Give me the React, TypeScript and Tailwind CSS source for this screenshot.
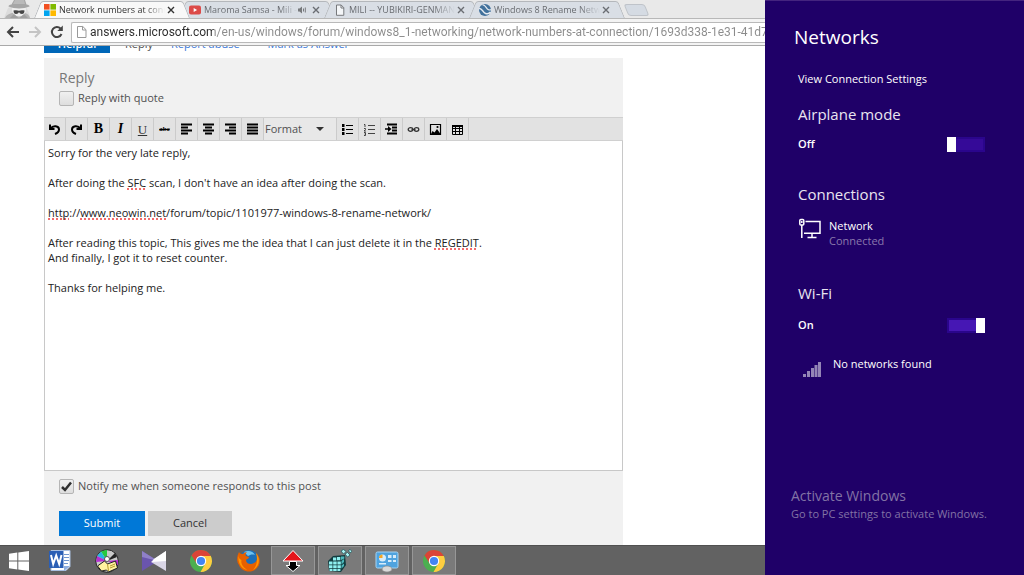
import React from 'react'

const TABS = [
  { title: 'Network numbers at conn', icon: 'microsoft', active: true },
  { title: 'Maroma Samsa - Mili -', icon: 'youtube', audio: true },
  { title: 'MILI -- YUBIKIRI-GENMAN', icon: 'page' },
  { title: 'Windows 8 Rename Netw', icon: 'neowin' },
]

const URL_TEXT =
  'answers.microsoft.com/en-us/windows/forum/windows8_1-networking/network-numbers-at-connection/1693d338-1e31-41d7-'

const TOOLS_LEFT = ['Undo', 'Redo', 'Bold', 'Italic', 'Underline', 'Strikethrough', 'Align left', 'Align center', 'Align right', 'Justify']
const TOOLS_RIGHT = ['Bulleted list', 'Numbered list', 'Indent', 'Link', 'Image', 'Table']

const PINNED = ['Word', 'Disc Burner', 'KMPlayer', 'Chrome', 'Firefox']
const RUNNING = ['Transfer', 'Registry Editor', 'Control Panel', 'Chrome Incognito']

const TabIcon = ({ name }: { name: string }) => {
  if (name === 'microsoft') {
    return (
      <svg className="size-3 shrink-0" viewBox="0 0 12 12">
        <path fill="#f25022" d="M0 0h5.600v5.600H0z" />
        <path fill="#7fba00" d="M6.400 0H12v5.600H6.400z" />
        <path fill="#00a4ef" d="M0 6.400h5.600V12H0z" />
        <path fill="#ffb900" d="M6.400 6.400H12V12H6.400z" />
      </svg>
    )
  }
  if (name === 'youtube') {
    return (
      <svg className="size-3 shrink-0" viewBox="0 0 12 12">
        <rect y="1.500" width="12" height="9" rx="2" fill="#dc4a48" />
        <path fill="#fff" d="M4.700 4v4l3.400-2z" />
      </svg>
    )
  }
  if (name === 'page') {
    return (
      <svg className="size-3 shrink-0" viewBox="0 0 12 12" fill="#f4f6f8" stroke="#77797c">
        <path d="M2.500 1h4.700l2.600 2.700v7.600H2.500z" />
        <path fill="none" d="M7 1v3h3" />
      </svg>
    )
  }
  return (
    <svg className="size-3 shrink-0" viewBox="0 0 12 12">
      <circle cx="6" cy="6" r="6" fill="#41719c" />
      <path fill="none" stroke="#e6ebf1" strokeWidth="1.500" d="M0 4.500c3-1 3.500 4 6.500 5s4 0 5-1.500" />
      <path fill="none" stroke="#e6ebf1" strokeWidth="1.200" d="M3.500 1c3-.5 3.500 3.500 5.500 4.500s2.500.5 3 0" />
    </svg>
  )
}

const Tab = ({ tab }: { tab: (typeof TABS)[number] }) => (
  <div
    className={`relative flex h-[17px] w-[155px] shrink-0 items-center -mr-2.5 pl-2.5 pr-3 before:absolute before:inset-y-0 before:left-0 before:w-1/2 before:origin-bottom-left before:-skew-x-[22deg] before:rounded-tl-[3px] before:border-l before:border-t before:border-[#b4b7bb] after:absolute after:inset-y-0 after:right-0 after:w-1/2 after:origin-bottom-right after:skew-x-[22deg] after:rounded-tr-[3px] after:border-r after:border-t after:border-[#b4b7bb] ${
      tab.active
        ? 'z-10 text-[#333] before:bg-[#f8f8f8] after:bg-[#f8f8f8]'
        : 'text-[#6a6d72] before:bg-[#d9dee5] after:bg-[#d9dee5]'
    }`}
  >
    <div className="relative z-10 flex min-w-0 flex-1 items-center">
      <TabIcon name={tab.icon} />
      <span className="ml-[3px] min-w-0 flex-1 whitespace-nowrap text-[9px] leading-4 [mask-image:linear-gradient(to_right,black_80%,transparent)]">
        {tab.title}
      </span>
      {tab.audio && (
        <svg className="mr-1 size-2 shrink-0" viewBox="0 0 8 8" fill="#77797c" stroke="#77797c">
          <path stroke="none" d="M0 2.500h1.500L4 .5v7L1.500 5.500H0z" />
          <path fill="none" d="M5.500 2.500v3M7.300 1.500v5" />
        </svg>
      )}
      <button aria-label="Close tab" className="flex size-3 shrink-0 items-center justify-center">
        <svg className="size-2" viewBox="0 0 8 8" stroke="currentColor" strokeWidth="1.400">
          <path d="M1 1l6 6M7 1L1 7" />
        </svg>
      </button>
    </div>
  </div>
)

const BrowserChrome = () => (
  <header className="relative shrink-0 border-b border-[#a9a9a9] bg-[#e9e9e9]">
    <div className="flex h-[18px] items-end">
      <svg className="h-[18px] w-[34px] shrink-0" viewBox="0 0 34 18">
        <path fill="#dcdcdc" d="M4 18L8 8 14 5h11l4 8 1 5z" />
        <path fill="#b4b4b4" d="M5 18c1-3 4-4 7-5h13c3 1 4 2 5 5z" />
        <ellipse cx="19" cy="10" rx="7" ry="6.500" fill="#efefef" />
        <path fill="#a6a6a6" d="M14 0h11l1.500 4.500c2 0 3 1 3 2-6 2.500-15 2.500-21 0 0-1 1-2 3-2z" />
        <path fill="#bababa" d="M15 0h9l1 4H13z" />
        <path fill="#454545" d="M13.500 10.500c2-.5 4-.5 5.500.3 1.500-.8 3.500-.8 5.500-.3 0 2.500-1 3.500-2.500 3.500s-2.500-1-3-2c-.5 1-1.500 2-3 2s-2.500-1-2.500-3.500z" />
        <path fill="#a0a0a0" d="M10 18l4-4 4.500 4zM28 18l-4-4-4.500 4z" />
      </svg>
      {TABS.map((tab) => (
        <Tab key={tab.title} tab={tab} />
      ))}
      <button aria-label="New tab" className="mb-0.5 ml-3 h-3 w-[21px] shrink-0 skew-x-[22deg] rounded-[3px] border border-[#bfc3c9] bg-[#d5dbe3]" />
    </div>
    <div className="flex h-[27px] items-center border-t border-[#b8b8b8] bg-[#f3f3f3] pl-1.5">
      <button aria-label="Back" className="flex w-[22px] shrink-0">
        <svg className="size-3.5" viewBox="0 0 14 14" fill="none" stroke="#444" strokeWidth="2">
          <path d="M13 7H2.500M7 2L2 7l5 5" />
        </svg>
      </button>
      <button aria-label="Forward" className="flex w-[22px] shrink-0">
        <svg className="size-3.5" viewBox="0 0 14 14" fill="none" stroke="#c4c4c4" strokeWidth="2">
          <path d="M1 7h10.500M7 2l5 5-5 5" />
        </svg>
      </button>
      <button aria-label="Reload" className="flex w-[21px] shrink-0">
        <svg className="size-3.5" viewBox="0 0 14 14" fill="none" stroke="#444" strokeWidth="2">
          <path d="M11.500 9A5 5 0 1 1 10.500 3.500" />
          <path fill="#444" stroke="none" d="M12.800.5v5.500H7.300z" />
        </svg>
      </button>
      <div className="flex h-[21px] min-w-0 flex-1 items-center rounded-l-xs border border-r-0 border-[#b9b9b9] bg-white pl-[3px]">
        <svg className="mr-px size-3.5 shrink-0" viewBox="0 0 14 14" fill="none" stroke="#999">
          <path d="M2.500 1.500h5.300l3.200 3.200v7.800H2.500zM7.500 1.500v3.500H11" />
        </svg>
        <input
          aria-label="Address"
          defaultValue={URL_TEXT}
          className='h-5 min-w-0 flex-1 bg-[linear-gradient(to_right,#2b2b2b_124px,#8b8b8b_124px)] bg-clip-text font-["Roboto",sans-serif] text-[12px] text-transparent outline-none'
        />
      </div>
    </div>
  </header>
)

const ToolIcon = ({ name }: { name: string }) => {
  const serif = 'font-["Liberation_Serif",serif] text-[14px] leading-none text-black'
  const lines: Record<string, string> = {
    'Align left': 'M1 1.500h11M1 4.500h7M1 7.500h11M1 10.500h7',
    'Align center': 'M1 1.500h11M3 4.500h7M1 7.500h11M3 10.500h7',
    'Align right': 'M1 1.500h11M5 4.500h7M1 7.500h11M5 10.500h7',
    Justify: 'M1 1.500h11M1 4.500h11M1 7.500h11M1 10.500h11',
  }
  if (name === 'Bold') return <b className={serif}>B</b>
  if (name === 'Italic') return <b className={`${serif} italic`}>I</b>
  if (name === 'Underline') return <span className='font-["Liberation_Serif",serif] text-[13px] leading-none text-[#333] underline'>U</span>
  if (name === 'Strikethrough') return <b className='font-["Liberation_Serif",serif] text-[7px] leading-none text-black line-through'>abc</b>
  return (
    <svg className="size-[13px]" viewBox="0 0 13 13" fill="none" stroke="#000" strokeWidth="2">
      {lines[name] && <path d={lines[name]} />}
      {name === 'Undo' && <path d="M2 1.500v4.500h4.500M2.500 5.500C5 2 11 2.500 11 6.500c0 2-1.500 3.500-4 4.500" />}
      {name === 'Redo' && <path d="M11 1.500v4.500H6.500M10.500 5.500C8 2 2 2.500 2 6.500c0 2 1.500 3.500 4 4.500" />}
      {name === 'Bulleted list' && (
        <>
          <path strokeWidth="1" d="M5 2.500h7M5 6.500h7M5 10.500h7" />
          <path strokeWidth="3" d="M1 2.500h2.500M1 6.500h2.500M1 10.500h2.500" />
        </>
      )}
      {name === 'Numbered list' && (
        <g stroke="#444">
          <path strokeWidth="1" d="M5 2.500h7M5 6.500h7M5 10.500h7M1 1.500h1V4M1 5.500h1.500v1L1 8h2M1 9.500h1.500v3H1M1.500 11h1" />
        </g>
      )}
      {name === 'Indent' && (
        <>
          <path d="M2 1.500h10M7 4.500h5M7 7.500h5M2 10.500h10" />
          <path strokeWidth="1.500" d="M0 6h4" />
          <path fill="#000" stroke="none" d="M3 3l3.500 3L3 9z" />
        </>
      )}
      {name === 'Link' && (
        <g strokeWidth="1.300" stroke="#333">
          <ellipse cx="3.500" cy="6.500" rx="2.300" ry="1.800" />
          <ellipse cx="9.500" cy="6.500" rx="2.300" ry="1.800" />
          <path d="M4.500 6.500h4" />
        </g>
      )}
      {name === 'Image' && (
        <>
          <path strokeWidth="1.200" d="M1.500 1.500h10v10h-10z" />
          <path fill="#000" stroke="none" d="M2 11l1.500-3 2 1.500L8 6l3.500 5z" />
          <circle cx="8.500" cy="4" r="1.100" fill="#000" stroke="none" />
        </>
      )}
      {name === 'Table' && (
        <>
          <path strokeWidth="1" d="M1.500 2.500h10v9h-10zM1.500 5.500h10M1.500 8.500h10M4.500 3v9M8.500 3v9" />
          <path d="M1 3h11" />
        </>
      )}
    </svg>
  )
}

const ToolButton = ({ name }: { name: string }) => (
  <button type="button" aria-label={name} className="flex h-full w-[22px] shrink-0 items-center justify-center border-r border-[#cbcbcb]">
    <ToolIcon name={name} />
  </button>
)

const Misspelt = ({ children }: { children: React.ReactNode }) => (
  <span className="underline decoration-[#f26d6d] decoration-dotted decoration-2 underline-offset-1 [text-decoration-skip-ink:none]">{children}</span>
)

const CHECKBOX =
  'size-[15px] shrink-0 appearance-none rounded-[2px] border border-[#b5b5b5] bg-linear-to-b from-[#f0f0f0] to-[#dedede]'

const ForumPage = () => (
  <main className="min-h-0 flex-1 overflow-hidden bg-white pl-11 pr-[142px] text-[#505050]">
    {/* post actions, scrolled under the browser bar */}
    <div className="-mt-3 flex h-[19px] items-center text-[11px] leading-[19px]">
      <button className="h-full w-[66px] bg-[#0067b8] font-semibold text-white">Helpful</button>
      <button className="ml-[15px]">Reply</button>
      <button className="ml-[18px] flex items-center gap-1 text-[#3a77d8]">
        Report abuse
        <svg className="size-1.5" viewBox="0 0 6 6"><path fill="#222" d="M0 1h6L3 5z" /></svg>
      </button>
      <button className="ml-[18px] text-[#3a77d8]">Mark as Answer</button>
    </div>

    <form className="mt-[5px] bg-[#f1f1f1]" onSubmit={(e) => e.preventDefault()}>
      <div className="px-[15px] pt-2.5">
        <h2 className="text-[14px] leading-5 text-[#777]">Reply</h2>
        <label className="mt-0.5 flex items-center gap-1 pb-[11px] text-[11px] leading-4">
          <input type="checkbox" className={CHECKBOX} />
          Reply with quote
        </label>
      </div>

      <div className="flex h-6 border-y border-[#d0d0d0] bg-[#e2e2e2]">
        {TOOLS_LEFT.map((name) => (
          <ToolButton key={name} name={name} />
        ))}
        <div className="relative w-[73px] shrink-0 border-r border-[#cbcbcb] bg-[#e8e8e8]">
          <select aria-label="Format" className="block h-[22px] w-full appearance-none pl-px text-[11px] leading-4 text-[#505050] outline-none">
            <option>Format</option>
          </select>
          <svg className="pointer-events-none absolute right-3 top-2 h-1.5 w-2" viewBox="0 0 8 6"><path fill="#333" d="M0 1h8L4 5z" /></svg>
        </div>
        {TOOLS_RIGHT.map((name) => (
          <ToolButton key={name} name={name} />
        ))}
      </div>

      <div
        role="textbox"
        aria-multiline="true"
        aria-label="Reply text"
        contentEditable
        suppressContentEditableWarning
        spellCheck={false}
        className="min-h-[330px] border border-t-0 border-[#c8c8c8] bg-white px-[3px] pt-1 text-[11px] leading-[15px] text-[#222] outline-none"
      >
        <p>Sorry for the very late reply,</p>
        <p className="mt-[15px]">After doing the <Misspelt>SFC</Misspelt> scan, I don't have an idea after doing the scan.</p>
        <p className="mt-[15px]"><Misspelt>http</Misspelt>://<Misspelt>www.neowin.net</Misspelt>/forum/topic/1101977-windows-8-rename-network/</p>
        <p className="mt-[15px]">After reading this topic, This gives me the idea that I can just delete it in the <Misspelt>REGEDIT</Misspelt>.</p>
        <p>And finally, I got it to reset counter.</p>
        <p className="mt-[15px]">Thanks for helping me.</p>
      </div>

      <div className="px-[15px] pb-6 pt-[7px]">
        <label className="flex items-center gap-1 text-[11px] leading-4">
          <span className="relative flex">
            <input type="checkbox" defaultChecked className={`peer ${CHECKBOX}`} />
            <svg className="pointer-events-none absolute inset-0 hidden size-[15px] peer-checked:block" viewBox="0 0 15 15" fill="none" stroke="#2f2f2f" strokeWidth="2.500">
              <path d="M3 8l3 3 6-7.500" />
            </svg>
          </span>
          Notify me when someone responds to this post
        </label>
        <div className="mt-[17px] flex gap-[3px] text-[11px]">
          <button type="submit" className="h-[25px] w-[86px] bg-[#0078d7] text-white">Submit</button>
          <button type="button" className="h-[25px] w-[84px] bg-[#cccccc] text-[#333]">Cancel</button>
        </div>
      </div>
    </form>
  </main>
)

const ChromeLogo = () => (
  <>
    <circle cx="12" cy="12" r="11" fill="#4caf50" />
    <path fill="#db4437" d="M12 12L2.500 6.500A11 11 0 0 1 21.800 7H12z" />
    <path fill="#ffcd40" d="M12 12V7h9.800A11 11 0 0 1 11.500 23l4.800-8.500z" />
    <path fill="#db4437" d="M2.500 6.500L7.700 14.500 12 7z" />
    <circle cx="12" cy="12" r="5.200" fill="#fff" />
    <circle cx="12" cy="12" r="4.100" fill="#4285f4" />
  </>
)

const AppIcon = ({ name }: { name: string }) => (
  <svg className="size-6" viewBox="0 0 24 24">
    {name === 'Word' && (
      <>
        <path fill="#fff" stroke="#a9bfe0" d="M3 1.500h19v16l-4 4H3z" />
        <path fill="#2b5fb5" d="M1 2h14.500v17H1z" />
        <path fill="none" stroke="#fff" strokeWidth="2" d="M3 6l2.200 9 3-8.500 3 8.500L13.500 6" />
        <path stroke="#6f95cf" d="M16 5.500h5M16 8.500h5M16 11.500h5M16 14.500h4" />
        <path fill="#8eaee0" d="M16 22l6-5h-6z" />
      </>
    )}
    {name === 'Disc Burner' && (
      <>
        <circle cx="12" cy="12" r="11.300" fill="#c9c9c9" stroke="#222" />
        <path fill="#27c93f" d="M12 12L6 2.500l6-1.800z" />
        <path fill="#27b7e0" d="M12 12L2 7l4-4.500z" />
        <path fill="#b62fd0" d="M12 12L1 13l1-6z" />
        <path fill="#222" d="M12 12l8-8 2 4z" />
        <path fill="#b62fd0" d="M12 12l11-1v5z" />
        <circle cx="12" cy="10" r="2.500" fill="#fff" stroke="#555" />
        <path fill="#fff3a0" stroke="#222" d="M2.500 17l7-5 3 3 8-3 2 7-9 4-2-2-5 1z" />
        <path stroke="#b59a2c" d="M12.500 15l1 7M15 17l5-2M15 19l5-2" />
      </>
    )}
    {name === 'KMPlayer' && (
      <>
        <path fill="#6a55ad" d="M0 2l16 10L0 22z" />
        <path fill="#8f80c7" d="M0 2l16 10L0 8z" />
        <path fill="#d9d6e6" d="M24 2v20L9 13l3-3z" />
        <path fill="#fff" d="M24 2v10L10 13l2-3z" />
      </>
    )}
    {(name === 'Chrome' || name === 'Chrome Incognito') && <ChromeLogo />}
    {name === 'Firefox' && (
      <>
        <circle cx="13" cy="10.500" r="9.500" fill="#1c6fb8" />
        <path fill="#6fc3ee" d="M8 3c4-2 9-1 11 3-3-1-5 0-7 1z" />
        <path fill="#e66000" d="M3 3c1 2 3 2 4 2 1-1 2-2 4-2-1 1-2 3-1 4l3 1c0 2-3 2-3 3 0 4 5 5 8 3 3-1 4-6 2-10 5 4 5 12 0 16-6 5-15 2-17-4C0 12 1 7 3 3z" />
        <path fill="#ff9500" d="M20 4c5 6 3 14-3 17 4-4 5-11 3-17zM2.500 6c0 3 1 4 3 5-1 4 2 8 6 10-6-1-10-7-9-15z" />
      </>
    )}
    {name === 'Transfer' && (
      <>
        <path fill="#e5151b" stroke="#fff" d="M12 1.500L22 12H2z" />
        <path fill="#000" stroke="#fff" d="M8.500 12.500h7v4H19l-7 6-7-6h3.500z" />
      </>
    )}
    {name === 'Registry Editor' && (
      <>
        <path fill="#123d40" d="M0 12l5-5 12-1 1 10-5 7-12-1z" />
        <path fill="#8ff0f0" d="M1 12.500h3.500v3H1zM5.200 12.500h3.500v3H5.200zM9.400 12.500h3.400v3H9.400zM1 16.200h3.500v3H1zM5.200 16.200h3.500v3H5.200zM9.400 16.200h3.400v3H9.400zM1.500 20h3v2h-3zM5.200 20h3.500v2H5.200zM9.400 20h3v2h-3zM5 8.500h3.300v3H5zM9 8h3.300v3.300H9z" />
        <path fill="#4bb9bc" d="M13.500 12l2.500-2v3l-2.500 2.500zM13.500 16.500l2.500-2v2.500l-2.500 2.500zM13 7.500h3.300v2L13 11z" />
        <path fill="#a9f3f3" stroke="#195054" strokeWidth=".7" d="M13 2l2.500-1.500L18 2.500 15.500 5zM17 5l2.500-1.500L22 6l-2.500 2zM20.500 1.500l1.800-1 1.500 2-1.800 1.500z" />
      </>
    )}
    {name === 'Control Panel' && (
      <>
        <rect x="1" y="3" width="22" height="16" rx="1.500" fill="#4fa3df" stroke="#a6d4f4" />
        <circle cx="7.500" cy="9" r="3.500" fill="#d7ecfa" />
        <path fill="#f6a623" d="M7.500 9V5.500A3.500 3.500 0 0 0 4 9z" />
        <path fill="#d7ecfa" d="M13 6h3.500v3H13zM18 6h3v3h-3zM13 11h3.500v2H13zM18 11h3v2h-3zM4 14h7v1.500H4z" />
        <ellipse cx="12" cy="20" rx="5" ry="3" fill="#d9d9d9" stroke="#8b8b8b" strokeWidth=".7" />
      </>
    )}
  </svg>
)

const Taskbar = () => (
  <nav className="flex h-[30px] shrink-0 border-t border-[#505050] bg-[#626262]">
    <button aria-label="Start" className="flex w-[38px] shrink-0 items-center justify-center">
      <svg className="size-5" viewBox="0 0 20 20" fill="#fff">
        <path d="M0 2.800L8.300 1.600v8H0zM9.300 1.500L20 0v9.600H9.300zM0 10.500h8.300v8L0 17.300zM9.300 10.500H20V20L9.300 18.600z" />
      </svg>
    </button>
    <div className="flex gap-[3px]">
      {PINNED.map((name) => (
        <button key={name} aria-label={name} className="flex w-11 items-center justify-center">
          <AppIcon name={name} />
        </button>
      ))}
    </div>
    <div className="flex gap-[3px] pl-px">
      {RUNNING.map((name) => (
        <button key={name} aria-label={name} className="flex w-11 items-center justify-center border border-[#979797] bg-[#7a7a7a]">
          <AppIcon name={name} />
        </button>
      ))}
    </div>
  </nav>
)

const Switch = ({ id, on }: { id: string; on?: boolean }) => (
  <input
    id={id}
    type="checkbox"
    role="switch"
    defaultChecked={on}
    className="flex h-[15px] w-[38px] appearance-none border-2 border-[#2a058c] bg-[#350a98] before:-m-0.5 before:h-[15px] before:w-[9px] before:bg-white checked:justify-end checked:bg-[#4617b4]"
  />
)

const NetworksPanel = () => (
  <aside className="flex w-[259px] shrink-0 flex-col border-t border-[#44247f] bg-[#1f0068] pb-[54px] pl-[33px] pr-[39px] pt-[22px] text-[11px] leading-5 text-white">
    <h1 className="-ml-1 text-[19px] leading-7">Networks</h1>
    <a href="#settings" className="mt-[18px]">View Connection Settings</a>

    <h2 className="mt-[13px] text-[15px] leading-6 text-[#e9e5f0]">Airplane mode</h2>
    <div className="mt-2 flex items-center justify-between">
      <label htmlFor="airplane" className="font-semibold">Off</label>
      <Switch id="airplane" />
    </div>

    <h2 className="mt-7 text-[15px] leading-6 text-[#e9e5f0]">Connections</h2>
    <button className="mt-3 flex gap-2 text-left leading-[15px]">
      <svg className="h-[22px] w-[23px] shrink-0" viewBox="0 0 23 22" fill="none" stroke="#fff" strokeWidth="1.500">
        <path d="M7.500 3.500H22v11.800H6M14 15.500v4M9.500 19.500h9" />
        <rect x="1.800" y="1.500" width="4" height="5.500" rx="1" />
        <path d="M3.800 7v13M3.800 3v2" />
      </svg>
      <span>
        <span className="block">Network</span>
        <span className="block text-[#8a78ac]">Connected</span>
      </span>
    </button>

    <h2 className="mt-[33px] text-[15px] leading-6 text-[#e9e5f0]">Wi-Fi</h2>
    <div className="mt-2.5 flex items-center justify-between">
      <label htmlFor="wifi" className="font-semibold">On</label>
      <Switch id="wifi" on />
    </div>
    <div className="mt-[19px] flex gap-3 pl-1">
      <svg className="mt-1 h-5 w-[19px]" viewBox="0 0 19 20" fill="#9485b6">
        <path d="M1 16h3v3H1zM5 13h3v6H5zM9 10h3v9H9zM12.500 7h3v12h-3zM16 4h3v15h-3z" />
      </svg>
      <span>No networks found</span>
    </div>

    <div className="-ml-[7px] mt-auto whitespace-nowrap text-[#8273a5]">
      <p className="text-[14px] leading-5">Activate Windows</p>
      <p className="leading-[15px]">Go to PC settings to activate Windows.</p>
    </div>
  </aside>
)

export default function App() {
  return (
    <div className='flex h-screen w-full overflow-hidden font-["Open_Sans","Noto_Sans",sans-serif]'>
      <div className="flex min-w-0 flex-1 flex-col">
        <BrowserChrome />
        <ForumPage />
        <Taskbar />
      </div>
      <NetworksPanel />
    </div>
  )
}
